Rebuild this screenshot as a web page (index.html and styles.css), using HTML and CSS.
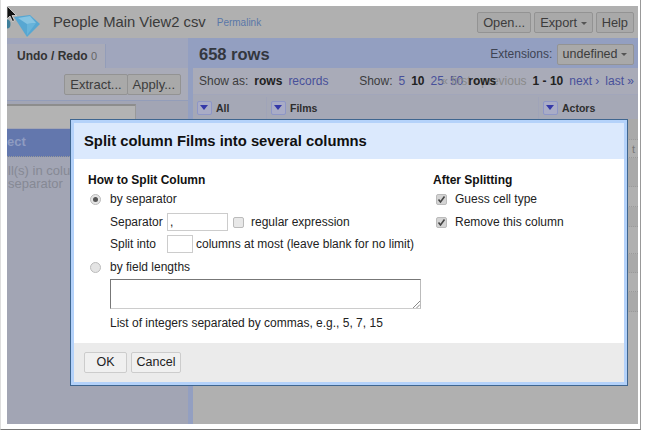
FILE: index.html
```html
<!DOCTYPE html>
<html lang="en">
<head>
    <meta charset="UTF-8">
    <title>Split column</title>
    <link rel="stylesheet" href="styles.css">
</head>
<body>
    <div class="frame">
        <div class="app">
            <div class="topbar">
                <svg class="logo" width="33" height="32" viewBox="0 0 33 32">
                    <ellipse cx="0" cy="18" rx="3.5" ry="4.5" fill="#3f7f9b"/>
                    <path d="M7 11 L23 9 L33 18 L20 31 Z" fill="#57a7d2"/>
                    <path d="M11 12 L23 10 L29 17 L20 18 Z" fill="#86c4e2"/>
                    <path d="M20 18 L29 17 L20 29 Z" fill="#68b4da"/>
                </svg>
                <span class="projectName">People Main View2 csv</span>
                <a class="permalink">Permalink</a>
                <div class="topButtons">
                    <span class="btn openBtn">Open...</span>
                    <span class="btn">Export <i class="caret"></i></span>
                    <span class="btn">Help</span>
                </div>
            </div>
            <div class="main">
                <div class="leftPanel">
                    <div class="tabRow"><div class="tab">Undo / Redo <em>0</em></div></div>
                    <div class="undoTools">
                        <div class="btnGroup"><span class="btn">Extract...</span><span class="btn">Apply...</span></div>
                    </div>
                    <div class="filterRow"><div class="filterBox"></div></div>
                    <div class="facetHead">ect</div>
                    <div class="facetText">ll(s) in colun<br>separator</div>
                </div>
                <div class="rightPanel">
                    <div class="summaryBar">
                        <span class="rowCount">658 rows</span>
                        <span class="extensions">Extensions: <span class="btn">undefined <i class="caret"></i></span></span>
                    </div>
                    <div class="viewBar">
                        <span class="showAs"><span>Show as:</span> <b>rows</b> <a>records</a></span>
                        <span class="paging">
                            <span>Show:</span>
                            <a>5</a>
                            <b>10</b>
                            <a>25</a>
                            <a>50</a>
                            <span class="prev">« first ‹ previous<b class="overlapRows">rows</b></span>
                            <b>1 - 10</b>
                            <a>next ›</a>
                            <a>last »</a>
                        </span>
                    </div>
                    <div class="tableHead">
                        <div class="col colAll"><i class="dropBtn"></i>All</div>
                        <div class="col colFilms"><i class="dropBtn"></i>Films</div>
                        <div class="col colActors"><i class="dropBtn"></i>Actors</div>
                    </div>
                    <div class="band h21"></div>
                    <div class="band light h18"><span class="cellText">t</span></div>
                    <div class="band h29"></div>
                    <div class="band light h20"></div>
                    <div class="band h20"></div>
                    <div class="band light h27"></div>
                    <div class="band h19"></div>
                    <div class="band light h19"></div>
                    <div class="band h20"></div>
                </div>
            </div>
        </div>

        <div class="dialog">
            <div class="dialogHead">Split column Films into several columns</div>
            <div class="dialogBody">
                <div class="howTo">
                    <h4>How to Split Column</h4>
                    <div class="optLine"><i class="radio on"></i>by separator</div>
                    <div class="subLine sepLine">
                        <span class="fieldName">Separator</span>
                        <span class="textbox sepBox">,</span>
                        <i class="checkbox"></i>
                        <span>regular expression</span>
                    </div>
                    <div class="subLine">
                        <span class="fieldName">Split into</span>
                        <span class="textbox intoBox"></span>
                        <span>columns at most (leave blank for no limit)</span>
                    </div>
                    <div class="optLine lengths"><i class="radio"></i>by field lengths</div>
                    <div class="lengthsArea">
                        <svg class="grip" width="8" height="8" viewBox="0 0 8 8"><path d="M1 8 L8 1 M4.5 8 L8 4.5" stroke="#888" fill="none"/></svg>
                    </div>
                    <div class="hint">List of integers separated by commas, e.g., 5, 7, 15</div>
                </div>
                <div class="after">
                    <h4>After Splitting</h4>
                    <div class="optLine"><i class="checkbox ticked"><svg width="9" height="9" viewBox="0 0 9 9"><path d="M1.5 4.5 L3.5 7 L7.5 1.5" stroke="#444" stroke-width="1.6" fill="none"/></svg></i>Guess cell type</div>
                    <div class="optLine second"><i class="checkbox ticked"><svg width="9" height="9" viewBox="0 0 9 9"><path d="M1.5 4.5 L3.5 7 L7.5 1.5" stroke="#444" stroke-width="1.6" fill="none"/></svg></i>Remove this column</div>
                </div>
            </div>
            <div class="dialogFoot">
                <span class="btn okBtn">OK</span>
                <span class="btn cancelBtn">Cancel</span>
            </div>
        </div>

        <svg class="cursor" width="12" height="18" viewBox="0 0 12 18"><path d="M1 1 L1 14 L4 11 L6.5 16.5 L8.5 15.5 L6 10.5 L10.5 10.5Z" fill="#111" stroke="#eee" stroke-width=".7"/></svg>
    </div>
</body>
</html>
```

FILE: styles.css
```css
html, body {
    margin: 0;
    height: 100%;
    background: #fff;
}
body {
    width: 645px;
    height: 432px;
    overflow: hidden;
    font-family: "Liberation Sans", Arial, sans-serif;
    font-size: 12px;
    color: #333;
}
.frame {
    position: relative;
    width: 641px;
    height: 430px;
    box-sizing: border-box;
    padding: 6px 2px 5px 6px;
    border-left: 1px solid #ddd;
    border-right: 1px solid #999;
    border-bottom: 1px solid #777;
}
.app {
    display: flex;
    flex-direction: column;
    height: 100%;
    background: #b0b0b0;
    overflow: hidden;
}
.topbar {
    display: flex;
    align-items: center;
    height: 32px;
    flex: none;
    background: #b0b0b0;
}
.logo {
    margin-right: 13px;
    flex: none;
}
.projectName {
    font-size: 14.8px;
    color: #3a3a3a;
}
.permalink {
    margin-left: 11px;
    font-size: 10px;
    color: #5a77a8;
}
.topButtons {
    margin-left: auto;
    margin-right: 4px;
    display: flex;
    gap: 3px;
    font-size: 12.8px;
}
.btn {
    display: inline-block;
    padding: 0 5px;
    height: 19px;
    line-height: 19px;
    border: 1px solid #939393;
    border-radius: 2px;
    background: #a9a9a9;
    color: #3c3c3c;
}
.openBtn {
    padding: 0 5px;
}
.caret {
    display: inline-block;
    margin-left: 0;
    vertical-align: middle;
    border: 3px solid transparent;
    border-top: 3px solid #555;
    border-bottom: 0;
}
.main {
    display: flex;
    flex: 1;
    min-height: 0;
}
.leftPanel {
    width: 181px;
    flex: none;
    background: #a2a5b4;
}
.tabRow {
    height: 30px;
    background: #a0a6bd;
    display: flex;
    align-items: flex-end;
}
.tab {
    width: 99px;
    height: 24px;
    box-sizing: border-box;
    padding: 5px 0 0 10px;
    background: #a9abb8;
    border-right: 1px solid #939db9;
    font-weight: bold;
    font-size: 12px;
    color: #333;
}
.tab em {
    font-style: normal;
    font-weight: normal;
    font-size: 11px;
    color: #666;
}
.undoTools {
    height: 33px;
    display: flex;
    justify-content: flex-end;
    align-items: flex-start;
    padding: 6px 7px 0 0;
    box-sizing: border-box;
    background: #a9abb8;
    border-bottom: 1px solid #939db9;
    font-size: 13px;
}
.btnGroup {
    display: flex;
}
.btnGroup .btn + .btn {
    margin-left: -1px;
}
.filterRow {
    height: 28px;
    box-sizing: border-box;
    padding-top: 3px;
}
.filterBox {
    width: 128px;
    height: 22px;
    background: #b3b3b3;
    border-top: 2px solid #8d8d8d;
    border-right: 1px solid #999;
}
.facetHead {
    height: 27px;
    line-height: 26px;
    background: #6377ad;
    color: #8f9cc1;
    font-weight: bold;
    font-size: 13px;
    border-bottom: 1px dotted #999;
}
.facetText {
    padding: 7px 0 0 1px;
    color: #868994;
    line-height: 13px;
    font-size: 13px;
}
.rightPanel {
    flex: 1;
    border-left: 5px solid #939fc1;
    background: #b0b0b0;
    min-width: 0;
}
.summaryBar {
    margin-left: -5px;
    height: 30px;
    background: #939fc1;
    display: flex;
    align-items: center;
    justify-content: space-between;
    padding: 2px 4px 0 11px;
    box-sizing: border-box;
}
.rowCount {
    font-size: 16.5px;
    font-weight: bold;
    color: #33373f;
}
.extensions {
    color: #3e4453;
}
.extensions .btn {
    margin-left: 1px;
    padding: 0 6px 0 5px;
    font-size: 12.5px;
}
.viewBar {
    height: 27px;
    display: flex;
    align-items: center;
    justify-content: space-between;
    padding: 0 4px 0 6px;
    background: #a9abb8;
    color: #3c3c3c;
    white-space: nowrap;
    border-bottom: 1px solid #a2a6ba;
    box-sizing: border-box;
}
.viewBar a {
    color: #48509a;
}
.viewBar b {
    color: #222;
}
.showAs {
    display: flex;
    gap: 6px;
}
.paging {
    display: flex;
    gap: 6px;
}
.prev {
    position: relative;
    margin-left: -28px;
    color: #8a8a8a;
}
.overlapRows {
    position: absolute;
    left: 27px;
    top: 0;
}
.tableHead {
    display: flex;
    height: 24px;
    box-sizing: border-box;
    padding-top: 2px;
    background: #a5a8b6;
    font-size: 10.5px;
    font-weight: bold;
    color: #2e2e2e;
}
.col {
    display: flex;
    align-items: center;
    border-right: 1px solid #a0a4b8;
    padding-left: 4px;
    box-sizing: border-box;
}
.colAll { width: 74px; }
.colFilms { width: 272px; }
.colActors { flex: 1; border-right: 0; }
.dropBtn {
    position: relative;
    width: 13px;
    height: 12px;
    margin-right: 4px;
    background: #a9acc6;
    border: 1px solid #8e96c6;
    border-radius: 2px;
}
.dropBtn::after {
    content: "";
    position: absolute;
    left: 2px;
    top: 3px;
    border: 4.5px solid transparent;
    border-top: 5px solid #3438a8;
    border-bottom: 0;
}
.band {
    box-sizing: border-box;
    background: #a9a9a9;
    border-bottom: 1px dotted #9a9a9a;
    text-align: right;
    padding-right: 3px;
    font-size: 11px;
    line-height: 18px;
    color: #777;
}
.band.light { background: #b0b0b0; }
.h18 { height: 18px; }
.h19 { height: 19px; }
.h20 { height: 20px; }
.h21 { height: 21px; }
.h27 { height: 27px; }
.h29 { height: 29px; }
.dialog {
    position: absolute;
    left: 69px;
    top: 119px;
    width: 558px;
    height: 267px;
    box-sizing: border-box;
    display: flex;
    flex-direction: column;
    background: #fff;
    border: 4px solid #b4d2fa;
    outline: 1px solid #3f6690;
    outline-offset: -1px;
    color: #222;
}
.dialogHead {
    height: 36px;
    flex: none;
    box-sizing: border-box;
    padding: 0 10px;
    line-height: 36px;
    background: #dbe9fd;
    font-size: 14.8px;
    font-weight: bold;
    color: #111;
}
.dialogBody {
    flex: 1;
    display: flex;
    padding: 14px 14px 0;
}
.howTo {
    width: 345px;
}
h4 {
    margin: 0 0 5px;
    font-size: 12px;
    line-height: 14px;
    color: #111;
}
.optLine {
    display: flex;
    align-items: center;
    height: 14px;
}
.radio {
    flex: none;
    width: 9px;
    height: 9px;
    margin: 0 9px 0 2px;
    border: 1px solid #bbb;
    border-radius: 50%;
    background: #e4e4e4;
    position: relative;
}
.radio.on::after {
    content: "";
    position: absolute;
    left: 2px;
    top: 2px;
    width: 5px;
    height: 5px;
    border-radius: 50%;
    background: #555;
}
.checkbox {
    flex: none;
    display: inline-flex;
    align-items: center;
    justify-content: center;
    width: 9px;
    height: 9px;
    border: 1px solid #bbb;
    border-radius: 2px;
    background: #e8e8e8;
    margin: 0 7px 0 5px;
}
.checkbox.ticked {
    margin: 0 8px 0 3px;
    background: #d4d4d4;
}
.subLine {
    display: flex;
    align-items: center;
    margin-left: 22px;
    height: 22px;
}
.sepLine {
    margin-top: 5px;
}
.fieldName {
    width: 57px;
}
.textbox {
    display: block;
    height: 16px;
    line-height: 16px;
    border: 1px solid #ccc;
    padding-left: 2px;
}
.sepBox {
    width: 57px;
}
.intoBox {
    width: 22px;
    margin-right: 3px;
}
.lengths {
    margin-top: 5px;
}
.lengthsArea {
    position: relative;
    margin: 5px 0 0 22px;
    width: 309px;
    height: 28px;
    border: 1px solid #777;
    border-bottom-color: #ccc;
    border-right-color: #bbb;
}
.grip {
    position: absolute;
    right: 0;
    bottom: 0;
}
.hint {
    margin: 7px 0 0 22px;
}
.second {
    margin-top: 9px;
}
.dialogFoot {
    height: 39px;
    flex: none;
    box-sizing: border-box;
    padding: 9px 10px 0;
    display: flex;
    gap: 4px;
    background: #ebebeb;
    font-size: 12.5px;
}
.dialogFoot .btn {
    background: #f0f0f0;
    border-color: #ccc;
    color: #222;
}
.okBtn {
    width: 41px;
    padding: 0;
    text-align: center;
}
.cancelBtn {
    width: 48px;
    padding: 0;
    text-align: center;
}
.cursor {
    position: absolute;
    left: 5px;
    top: 5px;
}
```
